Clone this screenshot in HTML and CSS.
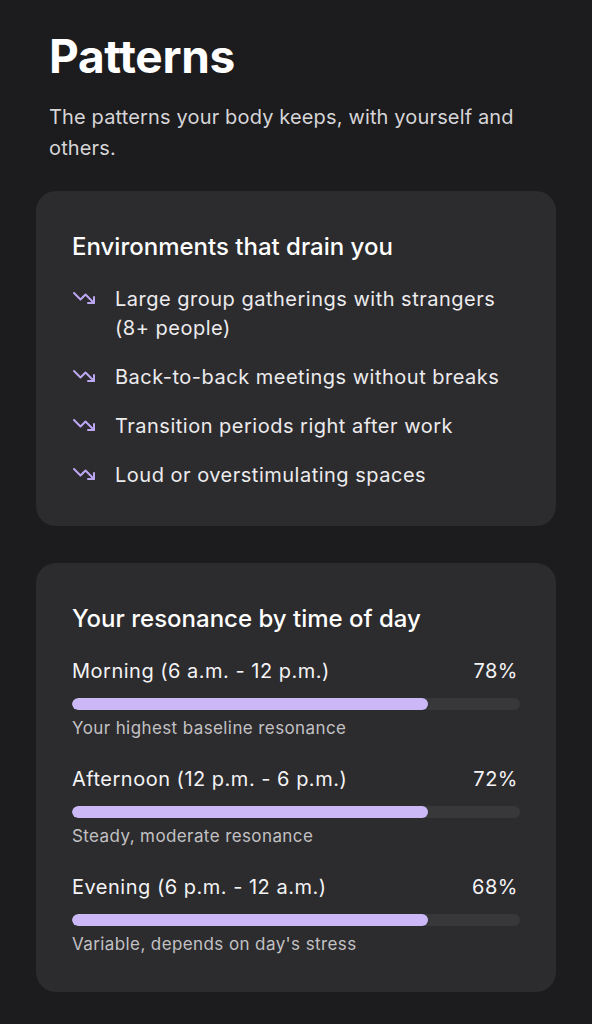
FILE: index.html
```html
<!DOCTYPE html>
<html>
	<head>
		<meta charset="UTF-8">
		<title>Patterns</title>
		<link rel="stylesheet" href="styles.css">
	</head>
	<body>
		<div class="page">
			<!--标题-->
			<div class="head">
				<h1 class="title">Patterns</h1>
				<p class="intro">The patterns your body keeps, with yourself and others.</p>
			</div>

			<!--消耗你的环境-->
			<div class="card">
				<h2 class="card-title">Environments that drain you</h2>
				<ul class="drain">
					<li>
						<svg class="ico" viewBox="0 0 24 24"><polyline points="22 17 13.5 8.5 8.5 13.5 2 7"/><polyline points="16 17 22 17 22 11"/></svg>
						<span>Large group gatherings with strangers (8+ people)</span>
					</li>
					<li>
						<svg class="ico" viewBox="0 0 24 24"><polyline points="22 17 13.5 8.5 8.5 13.5 2 7"/><polyline points="16 17 22 17 22 11"/></svg>
						<span>Back-to-back meetings without breaks</span>
					</li>
					<li>
						<svg class="ico" viewBox="0 0 24 24"><polyline points="22 17 13.5 8.5 8.5 13.5 2 7"/><polyline points="16 17 22 17 22 11"/></svg>
						<span>Transition periods right after work</span>
					</li>
					<li>
						<svg class="ico" viewBox="0 0 24 24"><polyline points="22 17 13.5 8.5 8.5 13.5 2 7"/><polyline points="16 17 22 17 22 11"/></svg>
						<span>Loud or overstimulating spaces</span>
					</li>
				</ul>
			</div>

			<!--一天中的共鸣-->
			<div class="card">
				<h2 class="card-title">Your resonance by time of day</h2>
				<div class="times">
					<div class="time">
						<div class="time-row"><span>Morning (6 a.m. - 12 p.m.)</span><span>78%</span></div>
						<div class="track"><div class="fill" style="width: 79.5%"></div></div>
						<p class="note">Your highest baseline resonance</p>
					</div>
					<div class="time">
						<div class="time-row"><span>Afternoon (12 p.m. - 6 p.m.)</span><span>72%</span></div>
						<div class="track"><div class="fill" style="width: 79.5%"></div></div>
						<p class="note">Steady, moderate resonance</p>
					</div>
					<div class="time">
						<div class="time-row"><span>Evening (6 p.m. - 12 a.m.)</span><span>68%</span></div>
						<div class="track"><div class="fill" style="width: 79.5%"></div></div>
						<p class="note">Variable, depends on day's stress</p>
					</div>
				</div>
			</div>
		</div>
	</body>
</html>
```

FILE: styles.css
```css
*{
	padding: 0;
	margin: 0;
	box-sizing: border-box;
}
body{
	background-color: #1c1b1d;
	color: #f4f3f5;
	font-family: Inter, "Noto Sans", sans-serif;
}
.page{
	padding: 28px 36px 40px;
	display: flex;
	flex-direction: column;
	gap: 37px;
}
.head{
	padding: 0 13px;
}
.title{
	font-size: 46px;
	line-height: 56px;
	font-weight: 700;
	letter-spacing: -0.3px;
	color: #ffffff;
}
.intro{
	margin-top: 18px;
	font-size: 20px;
	line-height: 31px;
	letter-spacing: 0.15px;
	color: #d6d5d8;
	margin-bottom: -10px;
}

.card{
	background-color: #2c2b2d;
	border-radius: 20px;
	padding: 40px 36px 36px;
}
.card-title{
	font-size: 24px;
	line-height: 32px;
	font-weight: 500;
	color: #ffffff;
}

.drain{
	list-style: none;
	margin-top: 22px;
	display: flex;
	flex-direction: column;
	gap: 20px;
}
.drain li{
	display: flex;
	gap: 19px;
	font-size: 20px;
	line-height: 29px;
	letter-spacing: 0.5px;
	color: #ecebee;
}
.drain .ico{
	flex: none;
	width: 24px;
	height: 24px;
	margin-top: 1px;
	fill: none;
	stroke: #bca7f2;
	stroke-width: 2;
	stroke-linecap: round;
	stroke-linejoin: round;
}

.times{
	margin-top: 22px;
	display: flex;
	flex-direction: column;
	gap: 25px;
}
.time-row{
	display: flex;
	justify-content: space-between;
	padding-right: 2px;
	font-size: 20px;
	line-height: 28px;
	letter-spacing: 0.5px;
	color: #f4f3f5;
}
.track{
	margin-top: 13px;
	height: 12px;
	border-radius: 6px;
	background-color: #383739;
	overflow: hidden;
}
.fill{
	height: 100%;
	border-radius: 6px;
	background-color: #ccb8f7;
}
.note{
	margin-top: 6px;
	font-size: 17px;
	line-height: 24px;
	letter-spacing: 0.4px;
	color: #c2c1c4;
}
```
